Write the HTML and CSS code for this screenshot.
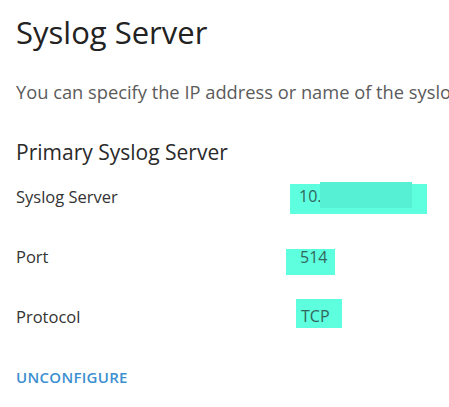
FILE: index.html
```html
<!DOCTYPE html>
<html>
<head>
<meta charset="utf-8">
<link rel="stylesheet" href="styles.css">
</head>
<body>
<div class="page">
  <h1 class="title">Syslog Server</h1>
  <p class="desc">You can specify the IP address or name of the syslog server to which logs are forwarded.</p>
  <h2 class="section">Primary Syslog Server</h2>
  <div class="rows">
    <div class="row">
      <div class="label">Syslog Server</div>
      <div class="value"><span class="mark mark-server">10.<span class="redact"></span></span></div>
    </div>
    <div class="row">
      <div class="label">Port</div>
      <div class="value"><span class="mark mark-port">514</span></div>
    </div>
    <div class="row">
      <div class="label">Protocol</div>
      <div class="value"><span class="mark mark-proto">TCP</span></div>
    </div>
  </div>
  <a class="action" href="#">UNCONFIGURE</a>
</div>
</body>
</html>
```
FILE: styles.css
```css
html, body {
  margin: 0;
  padding: 0;
  background: #ffffff;
}
body {
  width: 449px;
  height: 407px;
  overflow: hidden;
  font-family: "Open Sans", "Liberation Sans", sans-serif;
  color: #313131;
}
.page {
  padding: 12px 0 0 16px;
  white-space: nowrap;
}
.title {
  margin: 0;
  font-size: 31px;
  font-weight: 400;
  line-height: 40px;
  color: #222222;
}
.desc {
  margin: 28px 0 0 0;
  font-size: 18.3px;
  line-height: 24px;
  color: #5b5b5b;
}
.section {
  margin: 34px 0 0 0;
  font-size: 21px;
  font-weight: 400;
  line-height: 28px;
  color: #2a2a2a;
}
.rows {
  display: flex;
  flex-direction: column;
  margin-top: 1px;
}
.row {
  display: grid;
  grid-template-columns: 270px 1fr;
  align-items: start;
  height: 60px;
}
.label {
  padding-top: 22px;
  font-size: 16.5px;
  line-height: 16px;
  color: #333333;
}
.value {
  font-size: 16px;
  line-height: 16px;
  color: #33655c;
}
.mark {
  display: block;
  background: #5dffdf;
  position: relative;
  box-sizing: border-box;
}
.mark-server {
  margin: 17px 0 0 4px;
  padding: 4px 0 0 9px;
  width: 137px;
  height: 30px;
}
.redact {
  position: absolute;
  left: 30px;
  top: -2px;
  width: 92px;
  height: 26px;
  background: #56f0d4;
}
.mark-port {
  margin: 22px 0 0 0;
  padding: 0 0 0 14px;
  width: 49px;
  height: 26px;
}
.mark-proto {
  margin: 12px 0 0 10px;
  padding: 9px 0 0 5px;
  width: 46px;
  height: 29px;
}
.action {
  display: inline-block;
  margin-top: 22px;
  font-size: 15px;
  line-height: 16px;
  font-weight: 600;
  letter-spacing: 0.3px;
  color: #3c8fd0;
  text-decoration: none;
}
```
